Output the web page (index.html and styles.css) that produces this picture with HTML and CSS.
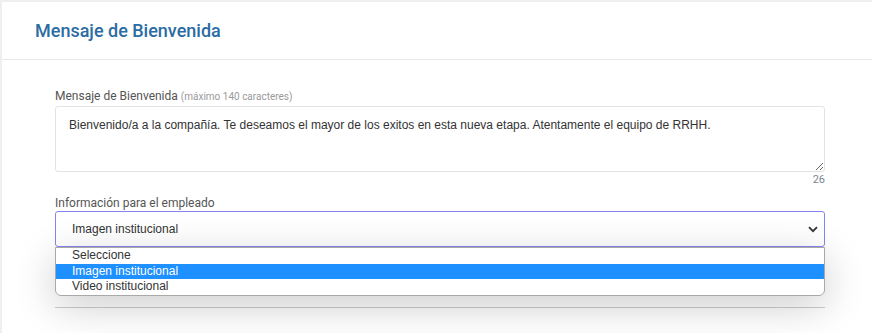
FILE: index.html
```html
<!DOCTYPE html>
<html lang="es">
<head>
  <meta charset="UTF-8" />
  <title>Mensaje de Bienvenida</title>
  <link rel="stylesheet" href="styles.css">
</head>
<body>
  <!-- Card with welcome message settings -->
  <div class="card">
    <div class="card-header">
      <h2 class="card-title">Mensaje de Bienvenida</h2>
    </div>

    <div class="card-body">
      <!-- Welcome message field -->
      <div class="field">
        <label class="field-label">Mensaje de Bienvenida <small class="hint">(máximo 140 caracteres)</small></label>
        <textarea class="textarea">Bienvenido/a a la compañía. Te deseamos el mayor de los exitos en esta nueva etapa. Atentamente el equipo de RRHH.</textarea>
        <div class="counter">26</div>
      </div>

      <!-- Employee info select, opened -->
      <div class="field select-field">
        <label class="field-label">Información para el empleado</label>
        <div class="select">
          <span>Imagen institucional</span>
          <svg class="chevron" width="10" height="7" viewBox="0 0 10 7">
            <path d="M1 1.2 L5 5.2 L9 1.2" fill="none" stroke="#333" stroke-width="1.8" />
          </svg>
        </div>
        <ul class="options">
          <li>Seleccione</li>
          <li class="selected">Imagen institucional</li>
          <li>Video institucional</li>
        </ul>
      </div>

      <div class="divider"></div>
    </div>
  </div>
</body>
</html>
```

FILE: styles.css
```css
/* Page reset */
html, body {
  margin: 0;
  padding: 0;
}

body {
  background-color: #efefef;
  font-family: Roboto, "Liberation Sans", sans-serif;
  height: 333px;
  overflow: hidden;
}

/* Card */
.card {
  margin: 2px 0 0 2px;
  background-color: #fff;
  height: 331px;
}

.card-header {
  height: 57px;
  border-bottom: 1px solid #e9e9e9;
  display: flex;
  align-items: center;
  padding-left: 33px;
}

.card-title {
  margin: 0;
  font-size: 18px;
  font-weight: 500;
  color: #2b6ca3;
}

.card-body {
  padding: 29px 0 0 53px;
  width: 770px;
}

/* Form fields */
.field-label {
  display: block;
  font-size: 12px;
  color: #555;
  margin-bottom: 3px;
}

.hint {
  font-size: 10px;
  color: #9a9a9a;
}

.textarea {
  display: block;
  box-sizing: border-box;
  width: 770px;
  height: 66px;
  margin: 0;
  padding: 11px 13px;
  border: 1px solid #e3e3e3;
  border-radius: 3px;
  font-family: "Liberation Sans", Arial, sans-serif;
  font-size: 12px;
  color: #333;
  resize: vertical;
  outline: none;
}

.counter {
  text-align: right;
  font-size: 11px;
  color: #7b8593;
  margin-top: 1px;
}

.select-field {
  position: relative;
  margin-top: 10px;
}

.select-field .field-label {
  margin-bottom: 1px;
}

.select {
  box-sizing: border-box;
  height: 36px;
  border: 1px solid #8585ef;
  border-radius: 3px;
  display: flex;
  align-items: center;
  justify-content: space-between;
  padding: 0 6px 0 16px;
  font-family: "Liberation Sans", Arial, sans-serif;
  font-size: 12px;
  color: #333;
}

/* Native-looking opened dropdown */
.options {
  position: absolute;
  top: 100%;
  left: 0;
  right: 0;
  margin: 0;
  padding: 0;
  list-style: none;
  background-color: #fff;
  border: 1px solid #a9a9a9;
  border-radius: 0 0 6px 6px;
  box-shadow: 0 10px 40px rgba(0, 0, 0, 0.2);
  font-family: "Liberation Sans", Arial, sans-serif;
  font-size: 12px;
  color: #333;
  z-index: 10;
}

.options li {
  height: 15.5px;
  line-height: 15px;
  padding-left: 16px;
}

.options .selected {
  background-color: #1e90ff;
  color: #fff;
}

.divider {
  margin-top: 60px;
  border-top: 1px solid #cfcfcf;
}
```
